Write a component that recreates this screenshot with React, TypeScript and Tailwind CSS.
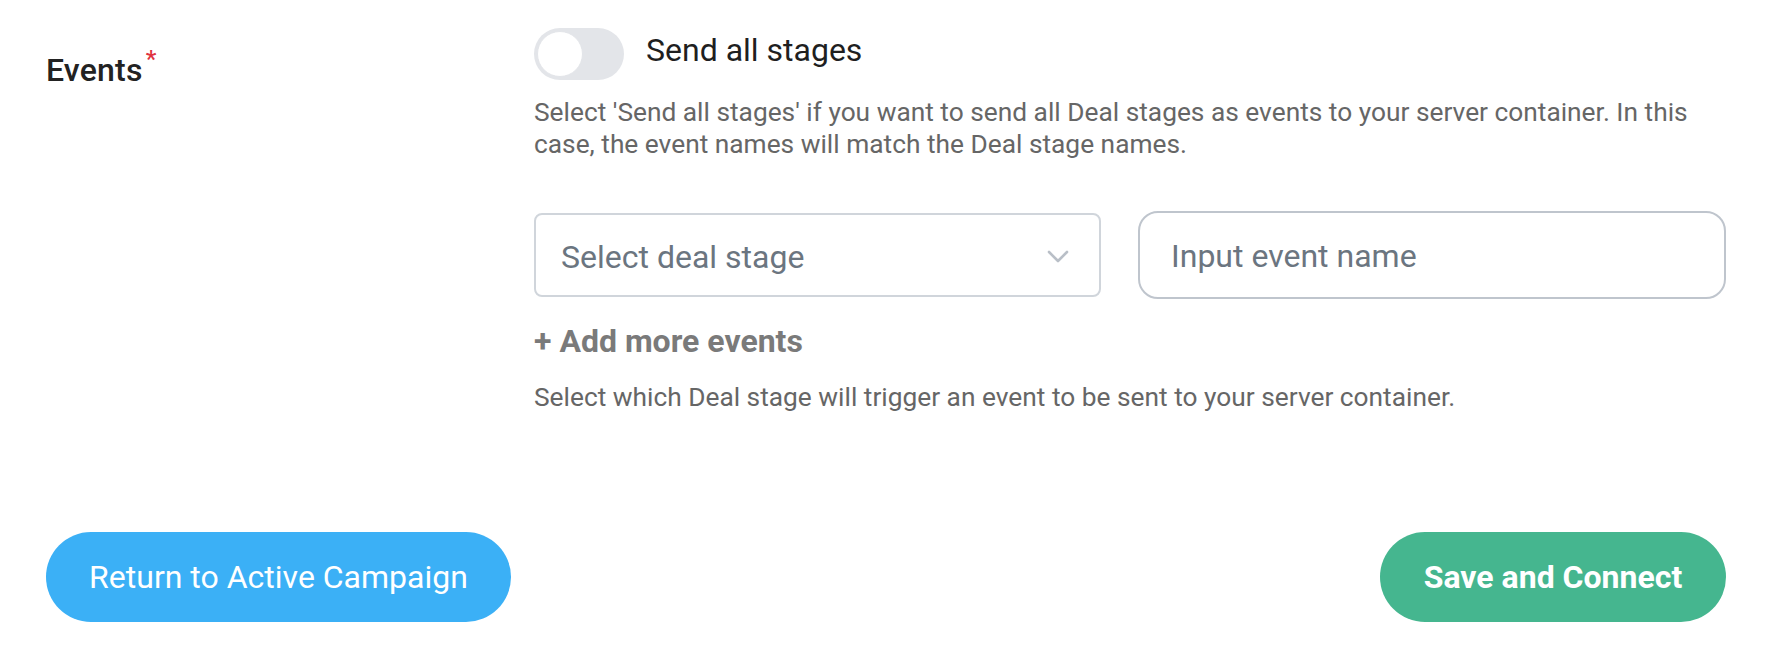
import React, { useState } from 'react';

export default function App() {
  const [sendAll, setSendAll] = useState(false);

  return (
    <div className="w-full h-[658px] bg-white pl-[46px] pr-[52px] pt-[28px] flex flex-col font-['Roboto',sans-serif]">
      <div className="flex">
        <div className="w-[488px] shrink-0 pt-[22px]">
          <span className="text-[32px] leading-[40px] font-medium text-[#222222] tracking-[0.2px]">
            Events<sup className="text-[#e0323f] text-[24px] top-[-14px] ml-[3px]">*</sup>
          </span>
        </div>

        <div className="flex-1 flex flex-col">
          <div className="flex items-center">
            <button
              onClick={() => setSendAll(!sendAll)}
              className={`w-[90px] h-[52px] rounded-full p-[3px] flex transition-colors ${sendAll ? 'bg-[#45b68f] justify-end' : 'bg-[#e3e5e9] justify-start'}`}
            >
              <span className="w-[46px] h-[46px] rounded-full bg-white border border-[#e3e5e9]" />
            </button>
            <span className="ml-[22px] text-[32px] leading-[40px] text-[#1f1f1f] -mt-[8px]">Send all stages</span>
          </div>

          <p className="mt-[16px] text-[26.3px] leading-[32px] text-[#666666]">
            Select 'Send all stages' if you want to send all Deal stages as events to your server container. In this case, the event names will match the Deal stage names.
          </p>

          <div className="mt-[51px] flex items-center gap-[37px] h-[88px]">
            <div className="w-[567px] h-[84px] shrink-0 border-2 border-[#d0d5db] rounded-[8px] flex items-center justify-between pl-[25px] pr-[30px] pt-[4px]">
              <span className="text-[32px] leading-[40px] text-[#6b7580]">Select deal stage</span>
              <svg width="22" height="14" viewBox="0 0 22 14" fill="none">
                <path d="M2 2l9 9 9-9" stroke="#b9bfc7" strokeWidth="2.6" strokeLinecap="round" strokeLinejoin="round" />
              </svg>
            </div>
            <div className="flex-1 h-[88px] border-2 border-[#bfc5cd] rounded-[20px] flex items-center pl-[31px] pt-[2px]">
              <span className="text-[32px] leading-[40px] text-[#6b7580]">Input event name</span>
            </div>
          </div>

          <div className="mt-[22px] text-[32px] leading-[40px] font-bold text-[#7a7a7a]">+ Add more events</div>

          <p className="mt-[20px] text-[26.3px] leading-[32px] text-[#666666]">
            Select which Deal stage will trigger an event to be sent to your server container.
          </p>
        </div>
      </div>

      <div className="mt-[119px] flex justify-between">
        <button className="w-[465px] h-[90px] rounded-full bg-[#3bb0f6] text-white text-[32px] leading-[40px]">
          Return to Active Campaign
        </button>
        <button className="w-[346px] h-[90px] rounded-full bg-[#45b68f] text-white text-[32px] leading-[40px] font-bold">
          Save and Connect
        </button>
      </div>
    </div>
  );
}
